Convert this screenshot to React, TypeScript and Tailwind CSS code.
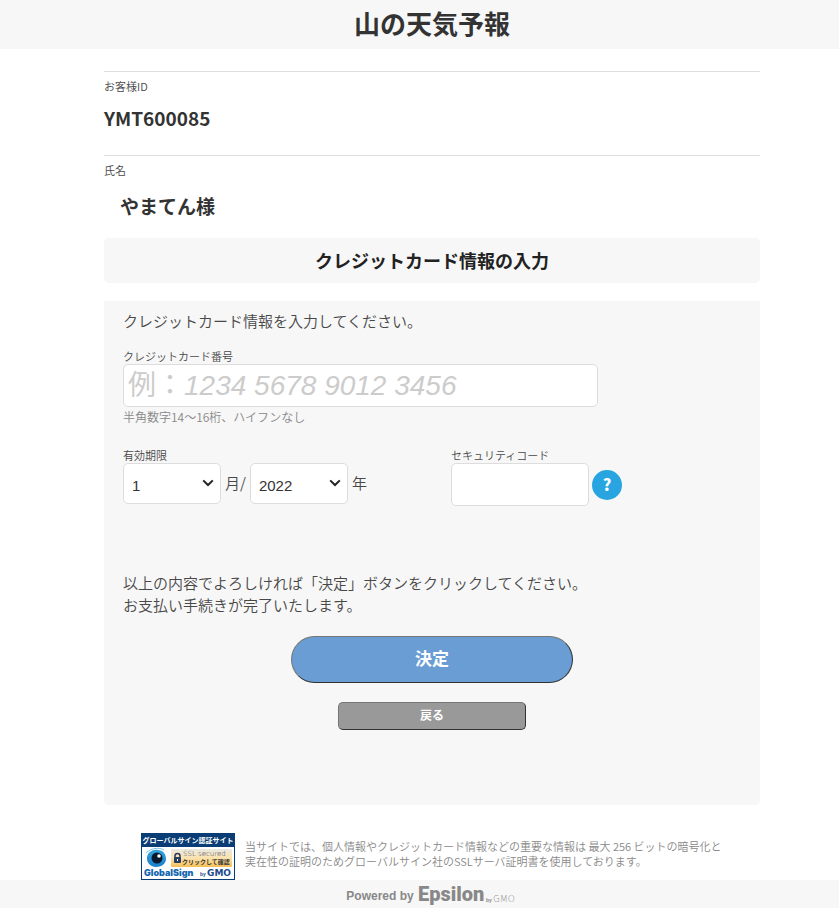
import { ReactNode, SVGProps, useState } from 'react';

const months = Array.from({ length: 12 }, (_, i) => String(i + 1));
const years = Array.from({ length: 15 }, (_, i) => String(2022 + i));

const IconChevron = (props: SVGProps<SVGSVGElement>) => (
    <svg viewBox="0 0 12 8" fill="none" stroke="#222" strokeWidth="2" {...props}>
        <path d="M1.2 1.4 6 6l4.8-4.6" />
    </svg>
);

const GlobalSignSeal = () => (
    <svg viewBox="0 0 94 47" className="h-[47px] w-[94px]" fontFamily="'Noto Sans CJK JP', sans-serif">
        <defs>
            <linearGradient id="sealButton" x1="0" y1="0" x2="0" y2="1">
                <stop offset="0" stopColor="#ebe8e4" />
                <stop offset="0.5" stopColor="#fbe3ad" />
                <stop offset="1" stopColor="#f5bf55" />
            </linearGradient>
            <linearGradient id="sealBlue" x1="0" y1="0" x2="0" y2="1">
                <stop offset="0" stopColor="#35a4e0" />
                <stop offset="1" stopColor="#1b7fc8" />
            </linearGradient>
        </defs>
        <rect width="94" height="47" fill="#0a3d75" />
        <rect x="1" y="14" width="92" height="32" fill="#fff" />
        <text x="47" y="10" fontSize="7" fontWeight="700" fill="#fff" textAnchor="middle">グローバルサイン認証サイト</text>
        <path d="M6 24c1-5 6-8 11-7 5 0 8 4 8 9 0 5-5 8-10 8s-9-4-9-8z" fill="url(#sealBlue)" />
        <path d="M5 20c5-5 13-6 18-3" stroke="#7cc4ec" fill="none" />
        <circle cx="16" cy="25" r="5.500" fill="#08192e" />
        <circle cx="18" cy="23" r="1.800" fill="#fff" />
        <rect x="30" y="16" width="61" height="18" rx="1" fill="url(#sealButton)" />
        <path d="M34 25v-2a2.5 2.5 0 0 1 5 0v2" stroke="#263c60" strokeWidth="1.5" fill="none" />
        <rect x="33" y="24" width="7" height="6" rx="1" fill="#263c60" />
        <path d="M36.500 26v2" stroke="#fff" />
        <text x="42" y="23" fontSize="7" fill="#2f4266" fontFamily="'DejaVu Sans', sans-serif">SSL secured</text>
        <text x="41" y="31" fontSize="6" fontWeight="700" fill="#333">クリックして確認</text>
        <text x="3" y="43" fontSize="9" fontWeight="900" fill="#1668b0" fontFamily="Inter, sans-serif">GlobalSign</text>
        <text x="59" y="43" fontSize="5" fontWeight="700" fill="#234b8c" fontFamily="'Liberation Sans', sans-serif">by</text>
        <text x="66" y="43" fontSize="9" fontWeight="700" fill="#234b8c" fontFamily="'DejaVu Sans', sans-serif">GMO</text>
    </svg>
);

const Field = ({ id, label, children }: { id: string; label: string; children: ReactNode }) => (
    <div>
        <label htmlFor={id} className="block text-[11px] leading-4">{label}</label>
        {children}
    </div>
);

type SelectBoxProps = { id: string; label?: string; value: string; options: string[]; onChange: (value: string) => void };

const SelectBox = ({ id, label, value, options, onChange }: SelectBoxProps) => (
    <div className="relative">
        <select
            id={id}
            aria-label={label}
            value={value}
            onChange={(e) => onChange(e.target.value)}
            className="block h-[41px] w-[98px] appearance-none rounded-[5px] border border-[#ddd] bg-white pt-1.5 pl-2 font-['Liberation_Sans',sans-serif] text-[15px] text-[#333]"
        >
            {options.map((option) => (
                <option key={option}>{option}</option>
            ))}
        </select>
        <IconChevron className="pointer-events-none absolute top-4 right-[7px] h-2 w-3" />
    </div>
);

export default function App() {
    const [month, setMonth] = useState('1');
    const [year, setYear] = useState('2022');

    return (
        <div lang="ja" className="bg-white font-['Noto_Sans_CJK_JP',sans-serif] text-[15px] font-[350] text-[#484848]">
            <header className="bg-[#f7f7f7] pb-1 pl-[25px]">
                <h1 className="text-center text-[26px] leading-[45px] font-bold text-[#333]">山の天気予報</h1>
            </header>

            <main className="flex flex-col items-center pt-[22px] pl-[25px]">
                <div className="w-full max-w-[656px]">
                    <dl>
                        <div className="h-[84px] border-t border-[#ddd] pt-1.5">
                            <dt className="text-[11px] leading-4">お客様ID</dt>
                            <dd className="mt-2.5 text-[19px] leading-7 font-bold text-[#333]">YMT600085</dd>
                        </div>
                        <div className="h-[83px] border-t border-[#ddd] pt-1.5">
                            <dt className="text-[11px] leading-4">氏名</dt>
                            <dd className="mt-3.5 pl-4 text-[19px] leading-7 font-bold text-[#333]">やまてん様</dd>
                        </div>
                    </dl>

                    <h2 className="rounded-[5px] bg-[#f7f7f7] text-center text-lg leading-[45px] font-bold text-[#222]">クレジットカード情報の入力</h2>

                    <form className="mt-[18px] rounded-b-[5px] bg-[#f7f7f7] px-[19px] pt-[9px] pb-[75px]" onSubmit={(e) => e.preventDefault()}>
                        <p className="leading-[22px]">クレジットカード情報を入力してください。</p>

                        <div className="mt-4">
                            <Field id="card-number" label="クレジットカード番号">
                                <input
                                    id="card-number"
                                    type="text"
                                    inputMode="numeric"
                                    placeholder="例：1234 5678 9012 3456"
                                    className="block h-[43px] w-full max-w-[475px] rounded-[5px] border border-[#ddd] bg-white px-1 font-['Liberation_Sans','Noto_Sans_CJK_JP',sans-serif] text-[28px] font-normal [font-synthesis:none] placeholder:text-[#ccc] placeholder:italic"
                                />
                            </Field>
                            <p className="mt-0.5 text-xs text-[#888]">半角数字14～16桁、ハイフンなし</p>
                        </div>

                        <div className="mt-[22px] flex">
                            <div className="w-[328px]">
                                <Field id="expire-month" label="有効期限">
                                    <div className="flex items-center gap-1">
                                        <SelectBox id="expire-month" value={month} options={months} onChange={setMonth} />
                                        <span>月/</span>
                                        <SelectBox id="expire-year" label="有効期限 年" value={year} options={years} onChange={setYear} />
                                        <span>年</span>
                                    </div>
                                </Field>
                            </div>
                            <Field id="security-code" label="セキュリティコード">
                                <div className="flex items-center gap-[3px]">
                                    <input
                                        id="security-code"
                                        type="text"
                                        inputMode="numeric"
                                        className="h-[43px] w-[138px] rounded-[5px] border border-[#ddd] bg-white px-1 text-[28px]"
                                    />
                                    <button type="button" className="size-[30px] rounded-full bg-[#28a5e0] pb-0.5 text-base leading-7 font-black text-white">?</button>
                                </div>
                            </Field>
                        </div>

                        <p className="mt-[66px] leading-[22px]">
                            以上の内容でよろしければ「決定」ボタンをクリックしてください。
                            <br />
                            お支払い手続きが完了いたします。
                        </p>

                        <div className="mt-5 flex flex-col items-center gap-[19px] font-bold text-white">
                            <button type="submit" className="h-[47px] w-[282px] rounded-full border border-t-[#767676] border-r-[#333] border-b-[#333] border-l-[#767676] bg-[#699dd4] pb-1 text-[17px]">決定</button>
                            <button type="button" className="h-7 w-[188px] rounded-[5px] border border-t-[#767676] border-r-[#333] border-b-[#333] border-l-[#767676] bg-[#999] pb-0.5 text-xs">戻る</button>
                        </div>
                    </form>

                    <div className="mt-7 flex gap-2.5 pl-[37px]">
                        <a href="#seal" aria-label="GlobalSign" className="shrink-0">
                            <GlobalSignSeal />
                        </a>
                        <p className="pt-1.5 text-[11px] leading-[15px] whitespace-nowrap text-[#888]">
                            当サイトでは、個人情報やクレジットカード情報などの重要な情報は 最大 256 ビットの暗号化と
                            <br />
                            実在性の証明のためグローバルサイン社のSSLサーバ証明書を使用しております。
                        </p>
                    </div>
                </div>
            </main>

            <footer className="flex h-7 items-center justify-center gap-1 bg-[#f7f7f7] pl-[25px] text-[#888]">
                <span className="pt-1 font-['Liberation_Sans',sans-serif] text-xs font-bold">Powered by</span>
                <svg viewBox="0 0 100 22" className="h-[22px] w-[100px]" fill="#888">
                    <text x="0" y="18" fontSize="20" fontWeight="900" fontFamily="Roboto, sans-serif">Epsilon</text>
                    <text x="68" y="19" fontSize="5" fontWeight="700" fontFamily="'Liberation Sans', sans-serif">by</text>
                    <text x="75" y="19" fontSize="9" fontFamily="'DejaVu Sans', sans-serif">GMO</text>
                </svg>
            </footer>
        </div>
    );
}
